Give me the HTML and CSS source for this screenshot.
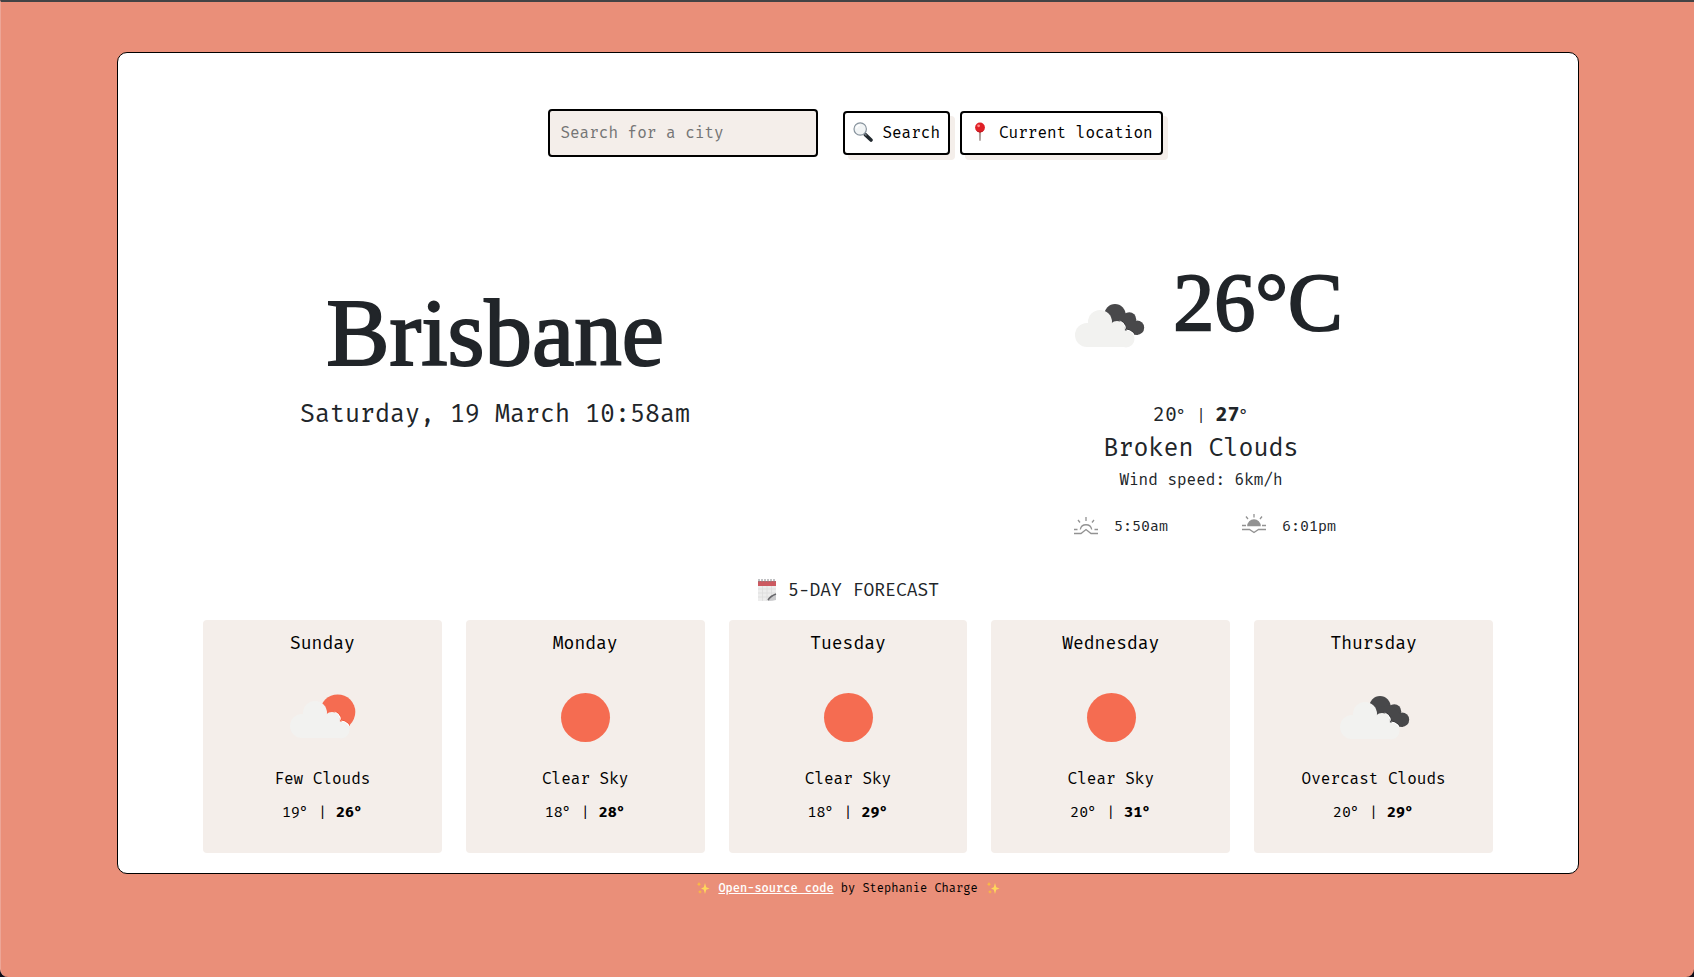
FILE: index.html
```html
<!DOCTYPE html>
<html lang="en">
<head>
<meta charset="utf-8">
<meta name="viewport" content="width=device-width, initial-scale=1">
<title>Weather in Brisbane</title>
<link rel="stylesheet" href="styles.css">
</head>
<body>
<svg class="defs" aria-hidden="true">
  <defs>
    <g id="cloud">
      <circle cx="27" cy="59" r="12"/>
      <circle cx="40" cy="46" r="12"/>
      <circle cx="57" cy="53" r="8"/>
      <circle cx="66" cy="63" r="8.5"/>
      <path d="M27 71h39.5l.5-15-10-7H40L28 50z"/>
    </g>
    <g id="dark-cloud">
      <circle cx="55" cy="38.7" r="10.7"/>
      <circle cx="69.3" cy="43.2" r="6.9"/>
      <circle cx="77" cy="51.7" r="7.2"/>
      <path d="M50 40 65 37 76 46 78 58.8 60 58z"/>
    </g>
    <clipPath id="behind"><path d="M42 20H92V59H70Z"/></clipPath>
    <symbol id="broken" viewBox="-1 2 100 96">
      <use href="#dark-cloud" fill="#48484a"/>
      <g clip-path="url(#behind)">
        <use href="#cloud" fill="#2b2b2d" stroke="#2b2b2d" stroke-width="3"/>
        <use href="#cloud" fill="#fff" stroke="#fff" stroke-width="2"/>
      </g>
      <use href="#cloud" fill="#f2f2f0"/>
    </symbol>
    <symbol id="few" viewBox="-3 3 100 96">
      <circle cx="62.7" cy="45" r="17.6" fill="#f56c51"/>
      <g clip-path="url(#behind)">
        <use href="#cloud" fill="#f04d2c" stroke="#f04d2c" stroke-width="3"/>
        <use href="#cloud" fill="#fff" stroke="#fff" stroke-width="2"/>
      </g>
      <use href="#cloud" fill="#f2f2f0"/>
    </symbol>
    <symbol id="clear" viewBox="0 2 100 96">
      <circle cx="50.5" cy="49.5" r="24.5" fill="#f56c51"/>
    </symbol>
    <symbol id="sparkles" viewBox="0 0 14 14">
      <path d="M9 2 10.2 6.2 13.5 7.5 10.2 8.8 9 13 7.8 8.8 5 7.5 7.8 6.2Z" fill="#ffd75a"/>
      <path d="M3 1 3.7 2.6 5.2 3.2 3.7 3.8 3 5.4 2.3 3.8 .8 3.2 2.3 2.6ZM4 9l.6 1.3 1.4.6-1.4.6L4 12.8l-.6-1.3-1.4-.6 1.4-.6Z" fill="#fcbf3c"/>
    </symbol>
  </defs>
</svg>

<main class="panel">
  <form class="search">
    <input class="search-input" type="search" placeholder="Search for a city" aria-label="Search for a city">
    <div class="search-buttons">
      <button class="btn" type="submit">
        <svg class="btn-icon" viewBox="0 0 20 20" aria-hidden="true">
          <path d="M12.3 12.6 18 18" stroke="#22292f" stroke-width="3.6" stroke-linecap="round"/>
          <path d="M11.5 11.5 13.5 13.5" stroke="#777f86" stroke-width="1.5"/>
          <circle cx="7.2" cy="7" r="6.2" fill="#f1f4f5" stroke="#87939d" stroke-width="1.2"/>
          <path d="M3.500 6.500Q4 3.500 7 3.200" fill="none" stroke="#fff" stroke-width="1.2"/>
        </svg>Search</button>
      <button class="btn" type="button">
        <svg class="btn-icon" viewBox="0 0 20 20" aria-hidden="true">
          <path d="M9.300 9h1.400l-.3 9.500h-.8Z" fill="#917c76" stroke="#917c76" stroke-width=".4"/>
          <circle cx="10" cy="5.500" r="4.900" fill="#e01f26"/>
          <path d="M6 8Q10 11.500 14 8 13 10.300 10 10.400 7 10.300 6 8Z" fill="#b3121a"/>
          <circle cx="8.600" cy="3.800" r="1.400" fill="#ff8b89"/>
        </svg>Current location</button>
    </div>
  </form>

  <section class="hero">
    <div class="place">
      <h1 class="city">Brisbane</h1>
      <p class="date">Saturday, 19 March 10:58am</p>
    </div>
    <div class="now">
      <div class="reading">
        <svg class="weather-icon" role="img" aria-label="Broken clouds"><use href="#broken"/></svg>
        <span class="degrees">26°C</span>
      </div>
      <p class="range"><span class="figure">20</span>° | <strong class="figure">27</strong>°</p>
      <p class="condition">Broken Clouds</p>
      <p class="wind">Wind speed: 6km/h</p>
      <div class="sun-times">
        <span class="sun-time">
          <svg class="sun-icon" viewBox="0 0 24 24" fill="none" stroke="#929292" stroke-width="1.3" role="img" aria-label="Sunrise">
            <path d="M12 3v4M4 6l2 2.500M20 6l-2 2.500M0 15.500h3.500M20.500 15.500H24M6.300 15.500a5.800 5.800 0 0 1 11.400 0M0 19.500h7l5-4 5 4h7"/>
          </svg>5:50am</span>
        <span class="sun-time">
          <svg class="sun-icon" viewBox="0 0 24 24" fill="none" stroke="#929292" stroke-width="1.3" role="img" aria-label="Sunset">
            <path d="M12 0v3.500M4 2.500l2 2.500M20 2.500l-2 2.500M0 11.500h4M20 11.500h4M0 15.500h7.500l4.500 3 4.500-3H24"/>
            <path d="M5.200 12.300a6.800 7 0 0 1 13.600 0Z" fill="#929292" stroke="none"/>
          </svg>6:01pm</span>
      </div>
    </div>
  </section>

  <section class="forecast">
    <h2 class="forecast-title">
      <svg class="calendar-icon" viewBox="0 0 20 24" aria-hidden="true">
        <path d="M1 4h18v13l-8 6H1Z" fill="#ededed"/>
        <path d="M1 11h18M1 15h18M1 19h15M5.500 8v15M10 8v15M14.500 8v12" stroke="#dadada" stroke-width=".7"/>
        <path d="M1 3h18v5H1Z" fill="#cc5960"/>
        <path d="M2 1v3M5 1v3M8 1v3M11 1v3M14 1v3M17 1v3" stroke="#85868a" stroke-width="1"/>
        <path d="M11 22q2.500-4 8-6v6q-3 1-8 1Z" fill="#c9c9cb"/>
        <path d="M11 22q2.500-4 8-6" fill="none" stroke="#67676b" stroke-width="1.500"/>
      </svg>5-DAY FORECAST</h2>
    <div class="days">
      <article class="day">
        <h3 class="day-name">Sunday</h3>
        <svg class="weather-icon" aria-hidden="true"><use href="#few"/></svg>
        <p class="day-sky">Few Clouds</p>
        <p class="day-range">19° | <strong>26°</strong></p>
      </article>
      <article class="day">
        <h3 class="day-name">Monday</h3>
        <svg class="weather-icon" aria-hidden="true"><use href="#clear"/></svg>
        <p class="day-sky">Clear Sky</p>
        <p class="day-range">18° | <strong>28°</strong></p>
      </article>
      <article class="day">
        <h3 class="day-name">Tuesday</h3>
        <svg class="weather-icon" aria-hidden="true"><use href="#clear"/></svg>
        <p class="day-sky">Clear Sky</p>
        <p class="day-range">18° | <strong>29°</strong></p>
      </article>
      <article class="day">
        <h3 class="day-name">Wednesday</h3>
        <svg class="weather-icon" aria-hidden="true"><use href="#clear"/></svg>
        <p class="day-sky">Clear Sky</p>
        <p class="day-range">20° | <strong>31°</strong></p>
      </article>
      <article class="day">
        <h3 class="day-name">Thursday</h3>
        <svg class="weather-icon" aria-hidden="true"><use href="#broken"/></svg>
        <p class="day-sky">Overcast Clouds</p>
        <p class="day-range">20° | <strong>29°</strong></p>
      </article>
    </div>
  </section>
</main>

<footer class="credit">
  <svg class="sparkles" aria-hidden="true"><use href="#sparkles"/></svg>
  <span><a class="credit-link" href="#source">Open-source code</a> by Stephanie Charge</span>
  <svg class="sparkles" aria-hidden="true"><use href="#sparkles"/></svg>
</footer>
</body>
</html>
```
FILE: styles.css
```css
*,
*::before,
*::after {
  box-sizing: border-box;
}

html {
  background: #0d0d18;
}

body {
  min-height: 100vh;
  margin: 0;
  padding: 50px 115px 20px 116px;
  border-top: 2px solid #434345;
  border-left: 1px solid #eda697;
  border-radius: 0 0 8px 8px;
  background: #ea8f79;
  color: #212529;
  font-family: "Fira Mono", "DejaVu Sans Mono", "Liberation Mono", monospace;
  font-size: 16px;
}

h1,
h2,
h3,
p {
  margin: 0;
  font-weight: 400;
}

.defs {
  position: absolute;
  width: 0;
  height: 0;
}

.panel {
  padding: 56px 24px 20px;
  border: 1px solid #000;
  border-radius: 10px;
  background: #fff;
}

.search {
  display: flex;
  flex-wrap: wrap;
  align-items: center;
  justify-content: center;
  gap: 25px;
  padding-left: 15px;
}

.search-input {
  width: 270px;
  height: 48px;
  padding: 0 10px 2px;
  border: 2px solid #000;
  border-radius: 4px;
  background: #f4eeea;
  font: inherit;
  appearance: none;
}

.search-input::placeholder {
  color: #757575;
}

.search-buttons {
  display: flex;
  gap: 10px;
}

.btn {
  display: flex;
  align-items: center;
  gap: 9px;
  height: 44px;
  padding: 0 8px 2px;
  border: 2px solid #000;
  border-radius: 4px;
  background: #fff;
  box-shadow: 5px 5px 0 #f4eeea;
  color: #000;
  font: inherit;
}

.btn-icon {
  width: 20px;
  height: 20px;
}

.hero {
  display: grid;
  grid-template-columns: 1fr 1fr;
  margin-top: 98px;
  text-align: center;
}

.place {
  padding-top: 30px;
}

.city,
.degrees {
  font-family: "Liberation Serif", serif;
  line-height: 96px;
  -webkit-text-stroke: 2px #212529;
}

.city {
  font-size: 95px;
}

.date {
  margin-top: 14px;
  font-size: 25px;
  line-height: 38px;
}

.reading {
  display: flex;
  align-items: flex-end;
  justify-content: center;
  gap: 14px;
}

.degrees {
  padding-bottom: 23px;
  font-size: 82px;
}

.weather-icon {
  display: block;
  width: 100px;
  height: 96px;
}

.range,
.condition,
.wind {
  line-height: 32px;
}

.range {
  margin-top: 24px;
}

.figure {
  font-size: 20px;
}

.condition {
  font-size: 25px;
}

.sun-times {
  display: flex;
  justify-content: center;
  gap: 74px;
  margin-top: 18px;
  padding-left: 8px;
  font-size: 15px;
  line-height: 24px;
}

.sun-time {
  display: flex;
  align-items: center;
  gap: 16px;
}

.sun-icon {
  width: 24px;
  height: 24px;
}

.forecast {
  margin-top: 38px;
  padding: 0 61px;
}

.forecast-title {
  display: flex;
  align-items: center;
  justify-content: center;
  gap: 11px;
  font-size: 18px;
  line-height: 28px;
}

.calendar-icon {
  width: 20px;
  height: 24px;
}

.days {
  display: grid;
  grid-template-columns: repeat(5, 1fr);
  gap: 24px;
  margin-top: 16px;
}

.day {
  display: flex;
  flex-direction: column;
  align-items: center;
  padding: 9px 8px 29px;
  border-radius: 4px;
  background: #f4eeea;
  color: #000;
  text-align: center;
}

.day-name {
  margin-bottom: 13px;
  font-size: 18px;
  line-height: 28px;
}

.day-sky {
  margin-top: 1px;
  line-height: 24px;
}

.day-range {
  margin-top: 9px;
  font-size: 15px;
  line-height: 24px;
}

.credit {
  display: flex;
  align-items: center;
  justify-content: center;
  gap: 8px;
  margin-top: 4px;
  color: #000;
  font-size: 12px;
  line-height: 20px;
}

.credit-link {
  color: #fff;
  font-weight: 500;
}

.sparkles {
  width: 14px;
  height: 14px;
}
```
